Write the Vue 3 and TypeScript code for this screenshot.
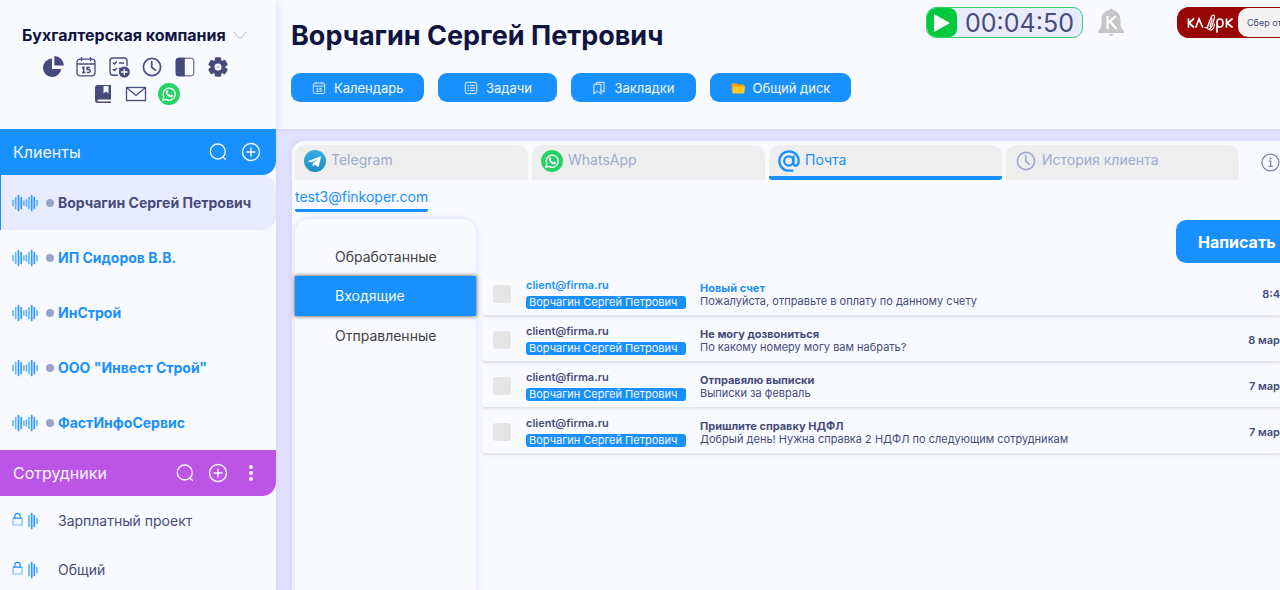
<script setup lang="ts">
interface Mail {
  from: string
  client: string
  subject: string
  snippet: string
  date: string
  unread: boolean
}

const company = 'Бухгалтерская компания'
const currentClient = 'Ворчагин Сергей Петрович'
const toolsTop = ['pie', 'calendar', 'tasks', 'clock', 'panel', 'gear']
const toolsBottom = ['book', 'mail', 'whatsapp']
const toolNames: Record<string, string> = {
  pie: 'Отчёты', calendar: 'Календарь', tasks: 'Задачи', clock: 'Время', panel: 'Панель',
  gear: 'Настройки', book: 'Закладки', mail: 'Почта', whatsapp: 'WhatsApp',
}
const clients = [currentClient, 'ИП Сидоров В.В.', 'ИнСтрой', 'ООО "Инвест Строй"', 'ФастИнфоСервис']
const staff = ['Зарплатный проект', 'Общий']
const actions = [
  { icon: 'calendar', label: 'Календарь' },
  { icon: 'list', label: 'Задачи' },
  { icon: 'bookmarks', label: 'Закладки' },
  { icon: 'folder', label: 'Общий диск' },
]
const tabs = [
  { icon: 'telegram', label: 'Telegram' },
  { icon: 'whatsapp', label: 'WhatsApp' },
  { icon: 'at', label: 'Почта' },
  { icon: 'clock', label: 'История клиента' },
]
const folders = ['Обработанные', 'Входящие', 'Отправленные']
const mails: Mail[] = [
  { from: 'client@firma.ru', client: currentClient, subject: 'Новый счет', snippet: 'Пожалуйста, отправьте в оплату по данному счету', date: '8:4', unread: true },
  { from: 'client@firma.ru', client: currentClient, subject: 'Не могу дозвониться', snippet: 'По какому номеру могу вам набрать?', date: '8 мар', unread: false },
  { from: 'client@firma.ru', client: currentClient, subject: 'Отправялю выписки', snippet: 'Выписки за февраль', date: '7 мар', unread: false },
  { from: 'client@firma.ru', client: currentClient, subject: 'Пришлите справку НДФЛ', snippet: 'Добрый день! Нужна справка 2 НДФЛ по следующим сотрудникам', date: '7 мар', unread: false },
]
</script>

<template>
  <div class="app">
    <svg class="sprite" aria-hidden="true">
      <symbol id="pie" viewBox="0 0 22 22">
        <path fill="currentColor" d="M10 2.6A9.2 9.2 0 1 0 19.3 13H10z" />
        <path fill="currentColor" d="M12.3 0A9.6 9.6 0 0 1 21.8 9.6h-9.5z" />
      </symbol>
      <symbol id="calendar" viewBox="0 0 22 22">
        <g fill="none" stroke="currentColor" stroke-width="1.3">
          <rect x="2" y="3.2" width="18" height="16.6" rx="3" />
          <path d="M2 8h18M6.5 1v4.2M15.5 1v4.2" />
          <path stroke-width="1.5" d="M7 12.2l1.7-.9v5.2M7 16.5h3.4M15.2 11.5h-3v2.1c3.8-.6 3.8 2.9 1.3 2.9q-1 0-1.6-.5" />
        </g>
      </symbol>
      <symbol id="tasks" viewBox="0 0 22 22">
        <g fill="none" stroke="currentColor" stroke-width="1.4">
          <path d="M10 19.3H5a3 3 0 0 1-3-3V5a3 3 0 0 1 3-3h11a3 3 0 0 1 3 3v5" />
          <path d="M5 6.5l1.500 1.500L9 5.500M5 13l1.500 1.500L9 12M11 7h5M11 12.500h2" />
        </g>
        <circle cx="16.3" cy="16" r="5.500" fill="currentColor" />
        <path d="M16.3 12.7v6.6M13 16h6.6" stroke="#f9faff" stroke-width="1.3" />
      </symbol>
      <symbol id="clock" viewBox="0 0 22 22">
        <g fill="none" stroke="currentColor" stroke-width="1.7" stroke-linecap="round">
          <circle cx="11" cy="11" r="8.6" />
          <path d="M10.700 5.500v5.700l3.600 3" />
        </g>
      </symbol>
      <symbol id="panel" viewBox="0 0 22 22">
        <rect x="2.200" y="2.200" width="17.600" height="17.600" rx="2.500" fill="none" stroke="currentColor" stroke-width="1" />
        <path fill="currentColor" d="M4.200 1.700h6.600v18.600H4.200A2.500 2.500 0 0 1 1.700 17.800V4.200A2.500 2.500 0 0 1 4.200 1.700z" />
      </symbol>
      <symbol id="gear" viewBox="0 0 22 22">
        <g fill="currentColor">
          <path fill-rule="evenodd" d="M11 3.500a7.500 7.500 0 1 0 0 15 7.500 7.500 0 0 0 0-15zm0 4a3.500 3.500 0 1 1 0 7 3.500 3.500 0 0 1 0-7z" />
          <g id="teeth">
            <rect x="7.800" y="1.200" width="6.400" height="5" rx="1.300" />
            <rect x="7.800" y="15.800" width="6.400" height="5" rx="1.300" />
          </g>
          <use href="#teeth" transform="rotate(60 11 11)" />
          <use href="#teeth" transform="rotate(120 11 11)" />
        </g>
        <circle cx="11" cy="11" r="3" fill="#f9faff" />
        <circle cx="11" cy="11" r="1.700" fill="currentColor" opacity=".25" />
      </symbol>
      <symbol id="book" viewBox="0 0 22 22">
        <path fill="currentColor" fill-rule="evenodd" d="M6 2h13v14.500H6.500a1 1 0 0 0 0 2H19V20H6a3 3 0 0 1-3-3V5a3 3 0 0 1 3-3zm5.500 1v7.500l2.500-2 2.500 2V3z" />
      </symbol>
      <symbol id="mail" viewBox="0 0 22 22">
        <g fill="none" stroke="currentColor" stroke-width="1.3">
          <rect x="1.500" y="4.500" width="19" height="13" />
          <path d="M1.500 4.500l9.500 8 9.500-8" />
        </g>
      </symbol>
      <symbol id="whatsapp" viewBox="0 0 22 22">
        <circle cx="11" cy="11" r="11" fill="#25d366" />
        <path fill="none" stroke="#fff" stroke-width="1.3" d="M4.900 17.300l.9-3.300a6.100 6.100 0 1 1 2.300 2.400z" />
        <path fill="#fff" d="M8.400 7.600c.5-.5 1-.4 1.200 0l.6 1.300c.1.400-.5.900-.6 1.200.6 1.100 1.500 1.900 2.700 2.300.4-.2.700-1 1.100-.9l1.500.8c.3.300 0 1.200-.5 1.600-1 .7-2.700.3-4.300-.9-1.800-1.400-2.900-3.500-1.700-5.400z" />
      </symbol>
      <symbol id="telegram" viewBox="0 0 22 22">
        <linearGradient id="tg" x1="0" y1="0" x2="0" y2="1">
          <stop offset="0" stop-color="#37aee2" /><stop offset="1" stop-color="#1e8cc4" />
        </linearGradient>
        <circle cx="11" cy="11" r="11" fill="url(#tg)" />
        <path fill="#fff" d="M4.500 11l11.500-4.600c.6-.2 1 .1.800 1l-1.900 8.900c-.1.600-.6.700-1.100.4l-3-2.200-1.500 1.500c-.3.300-.6.200-.6-.2l.1-2.600 5.200-4.800-6.500 4.100-3-.9c-.5-.1-.5-.4 0-.6z" />
      </symbol>
      <symbol id="at" viewBox="0 0 22 22">
        <g fill="none" stroke="currentColor" stroke-width="2.300" stroke-linecap="round">
          <circle cx="10.800" cy="11" r="4.600" />
          <path d="M15.500 6.500v7c0 3.500 5.200 3 5.200-2.500A9.700 9.700 0 1 0 11 20.700h3.500" />
        </g>
      </symbol>
      <symbol id="list" viewBox="0 0 22 22">
        <g fill="none" stroke="currentColor" stroke-width="1.500">
          <rect x="2" y="2" width="18" height="18" rx="3" />
          <path d="M5.500 7h2.500M10 7h7M5.500 11h2.500M10 11h7M5.500 15h2.500M10 15h7" />
        </g>
      </symbol>
      <symbol id="bookmarks" viewBox="0 0 22 22">
        <path fill="none" stroke="currentColor" stroke-width="1.500" d="M3 5h11v15.500l-5.500-4.500L3 20.500zM7 5V2h12v15.500l-5-3" />
      </symbol>
      <symbol id="folder" viewBox="0 0 22 22">
        <path fill="#ffa000" d="M1 3.500h8l2 2h9a1 1 0 0 1 1 1V16H1z" />
        <path fill="#ffca28" d="M4.500 8.500H22l-1 10a1 1 0 0 1-1 1H2z" />
      </symbol>
      <symbol id="search" viewBox="0 0 22 22">
        <g fill="none" stroke="currentColor" stroke-width="1.300" stroke-linecap="round">
          <circle cx="10.800" cy="10.500" r="7.500" /><path d="M16.200 16.200l2.300 2.300" />
        </g>
      </symbol>
      <symbol id="plus" viewBox="0 0 22 22">
        <g fill="none" stroke="currentColor" stroke-width="1.400" stroke-linecap="round">
          <circle cx="11" cy="11" r="8.500" /><path d="M11 7v8M7 11h8" />
        </g>
      </symbol>
      <symbol id="dots" viewBox="0 0 22 22">
        <g fill="currentColor"><circle cx="11" cy="5" r="2" /><circle cx="11" cy="11" r="2" /><circle cx="11" cy="17" r="2" /></g>
      </symbol>
      <symbol id="info" viewBox="0 0 22 22">
        <g fill="none" stroke="currentColor" stroke-width="1.400">
          <circle cx="11" cy="11" r="9.800" /><path d="M9 9.500h2.300v6M8.800 15.500h4.800" />
        </g>
        <circle cx="11" cy="6.300" r="1.200" fill="currentColor" />
      </symbol>
      <symbol id="wave" viewBox="0 0 26 18">
        <g fill="none" stroke="#1890ff" stroke-width="1.700" stroke-linecap="round">
          <path opacity=".9" d="M6.500 1.500v15M9.200 3.500v11M19.700 1.500v15M22.300 3.500v11" />
          <path opacity=".65" d="M1 6.500v5M3.700 3.500v11M11.900 7v4M14.400 6v6M17 3.500v11M25 6.500v5" />
        </g>
      </symbol>
      <symbol id="lockwave" viewBox="0 0 26 18">
        <g fill="none" stroke="#1890ff" stroke-width="1.200">
          <path opacity=".6" d="M1 6.500v6.500h9V6.500" />
          <path d="M.8 6.200h9.400M2.800 6V4a2.700 2.700 0 0 1 5.400 0v2" />
        </g>
        <g stroke="#1890ff" stroke-width="1.700" stroke-linecap="round">
          <path opacity=".9" d="M19.700 1.500v15M22.300 3.500v11" />
          <path opacity=".65" d="M17 3.500v11M25 6.500v5" />
        </g>
      </symbol>
    </svg>

    <aside class="sidebar">
      <div class="brand">
        <button class="company" type="button">
          {{ company }}
          <svg class="chevron" viewBox="0 0 14 9"><path d="M1 1l6 7 6-7" /></svg>
        </button>
        <div class="tools">
          <button v-for="t in toolsTop" :key="t" class="tool" type="button" :aria-label="toolNames[t]"><svg><use :href="'#' + t" /></svg></button>
        </div>
        <div class="tools">
          <button v-for="t in toolsBottom" :key="t" class="tool" type="button" :aria-label="toolNames[t]"><svg><use :href="'#' + t" /></svg></button>
        </div>
      </div>

      <div class="section clients-head">
        <h2>Клиенты</h2>
        <button type="button" aria-label="Поиск клиента"><svg><use href="#search" /></svg></button>
        <button type="button" aria-label="Добавить клиента"><svg><use href="#plus" /></svg></button>
      </div>
      <ul class="list">
        <li v-for="(c, i) in clients" :key="c">
          <a href="#" class="client" :class="{ active: i === 0 }">
            <svg class="wave"><use href="#wave" /></svg><i class="dot" />{{ c }}
          </a>
        </li>
      </ul>

      <div class="section staff-head">
        <h2>Сотрудники</h2>
        <button type="button" aria-label="Поиск сотрудника"><svg><use href="#search" /></svg></button>
        <button type="button" aria-label="Добавить сотрудника"><svg><use href="#plus" /></svg></button>
        <button type="button" aria-label="Меню"><svg><use href="#dots" /></svg></button>
      </div>
      <ul class="list">
        <li v-for="s in staff" :key="s">
          <a href="#" class="staff"><svg class="wave"><use href="#lockwave" /></svg>{{ s }}</a>
        </li>
      </ul>
    </aside>

    <main class="main">
      <header class="header">
        <div class="heading">
          <h1>{{ currentClient }}</h1>
          <div class="actions">
            <button v-for="a in actions" :key="a.label" class="action" type="button">
              <svg><use :href="'#' + a.icon" /></svg>{{ a.label }}
            </button>
          </div>
        </div>
        <div class="timer">
          <button class="play" type="button" aria-label="Старт"><svg viewBox="0 0 16 18"><path d="M0 0l16 9-16 9z" /></svg></button>
          <time>00:04:50</time>
        </div>
        <button class="bell" type="button" aria-label="Уведомления">
          <svg viewBox="0 0 26 28">
            <path fill="#c6c6c6" d="M11.500 2a1.500 1.500 0 0 1 3 0C20 3 22.500 7 22.500 12v6l3.500 5.500v1.500H0v-1.500L3.500 18v-6C3.500 7 6 3 11.500 2zM10.500 26h5a2.500 2 0 0 1-5 0z" />
            <path fill="none" stroke="#fff" stroke-width="2.200" d="M9.500 8v13M18 8l-8 6.500M12 13.500l6.500 7.500" />
          </svg>
        </button>
        <a href="#" class="klerk" aria-label="Клерк">
          <svg viewBox="0 0 46 20">
            <g fill="none" stroke="#fff" stroke-width="1.700" stroke-linecap="round">
              <path d="M1.500 6v8M6.500 6L2 10l4.500 4M9 14l3-8 3.500 8M30 19V9q0-3 3-3t3 4-3 4-3-2.500M39.500 6v8M45 6l-5 4 5 4" />
              <path stroke-width="1.200" d="M18 14.500c2 1 3-1 4-4l2-6c1-3 4-3.500 3.500 0-.2 2-1.500 5-2.500 8-1 3.500-4 5-4.500 2.500-.3-2 1.500-5 2.500-8 .8-2.500 2.500-2 2 0l-2 6.500M23 17c2.500.5 4-2 4.500-6" />
            </g>
          </svg>
          <span>Сбер от</span>
        </a>
      </header>

      <section class="panel">
        <nav class="tabs">
          <button v-for="t in tabs" :key="t.label" type="button" class="tab" :class="[t.icon, { active: t.icon === 'at' }]">
            <svg><use :href="'#' + t.icon" /></svg>{{ t.label }}
          </button>
          <button class="info" type="button" aria-label="Информация"><svg><use href="#info" /></svg></button>
        </nav>
        <a href="#" class="account">test3@finkoper.com</a>
        <div class="mailbox">
          <nav class="folders">
            <a v-for="f in folders" :key="f" href="#" :class="{ active: f === 'Входящие' }">{{ f }}</a>
          </nav>
          <div class="messages">
            <button class="compose" type="button">Написать</button>
            <ul class="rows">
              <li v-for="(m, i) in mails" :key="i" class="row" :class="{ unread: m.unread }">
                <input type="checkbox" :aria-label="m.subject">
                <div class="sender"><strong>{{ m.from }}</strong><span>{{ m.client }}</span></div>
                <div class="body"><strong>{{ m.subject }}</strong><p>{{ m.snippet }}</p></div>
                <time>{{ m.date }}</time>
              </li>
            </ul>
          </div>
        </div>
      </section>
    </main>
  </div>
</template>

<style>
body { overflow: hidden; background: #e2e2ff; }
</style>

<style scoped>
.app { display: flex; min-height: 100vh; overflow: hidden; font-family: Inter, "Liberation Sans", sans-serif; color: #454c7b; background: #e2e2ff; }
.sprite { position: absolute; width: 0; height: 0; }
button { padding: 0; border: 0; background: none; color: inherit; font: inherit; cursor: pointer; }
button svg { display: block; }
a { color: inherit; text-decoration: none; }
h1, h2, p, ul { margin: 0; padding: 0; font-weight: inherit; }
ul { list-style: none; }

.sidebar { flex: 0 0 276px; background: #f9faff; box-shadow: 0 0 8px #d2d0ff; z-index: 1; }
.brand { box-sizing: border-box; height: 129px; padding-top: 24px; }
.company { display: flex; align-items: center; gap: 7px; margin: 0 0 10px 22px; font-size: 16px; line-height: 22px; font-weight: 700; color: #0f153f; white-space: nowrap; }
.chevron { width: 14px; height: 9px; fill: none; stroke: #b4bedb; stroke-width: 1; }
.tools { display: flex; justify-content: center; gap: 11px; padding-right: 5px; margin-bottom: 5px; }
.tool svg { width: 22px; height: 22px; }
.section { box-sizing: border-box; display: flex; align-items: center; gap: 11px; height: 46px; padding: 0 14px 0 13px; color: #f5f7ff; border-radius: 0 0 14px; }
.section h2 { flex: 1; font-size: 16px; }
.section svg { width: 22px; height: 22px; }
.clients-head { background: #1890ff; }
.staff-head { background: #bc55e5; }
.client, .staff { box-sizing: border-box; display: flex; align-items: center; padding-left: 12px; font-size: 14px; white-space: nowrap; }
.client { height: 55px; font-weight: 700; color: #1890ff; }
.client.active { color: #454c7b; background: #e9ecff; border-left: 1px solid #1890ff; border-radius: 0 14px 14px 0; padding-left: 11px; }
.staff { height: 49px; }
.wave { width: 26px; height: 18px; flex: none; }
.dot { width: 8px; height: 8px; margin: 0 4px 0 8px; border-radius: 50%; background: #99a3c9; }
.staff .wave { margin-right: 20px; }

.main { flex: 1; min-width: 0; display: flex; flex-direction: column; }
.header { box-sizing: border-box; display: flex; align-items: flex-start; height: 129px; padding: 7px 0 0 15px; background: #f9faff; box-shadow: 0 1px 3px #cfcfe8; }
.heading { flex: 1; }
h1 { padding-top: 12px; font-size: 27px; line-height: 34px; font-weight: 700; color: #0f153f; white-space: nowrap; }
.actions { display: flex; gap: 14px; margin-top: 20px; }
.action { box-sizing: border-box; display: flex; align-items: center; justify-content: center; gap: 8px; min-width: 119px; height: 29px; padding: 0 21px; border-radius: 9px; background: #1890ff; color: #f5f7ff; font-size: 13px; white-space: nowrap; }
.action svg { width: 14px; height: 14px; }
.timer { box-sizing: border-box; display: flex; width: 157px; height: 31px; border: 1px solid #33d06a; border-radius: 10px; background: #e9ecff; overflow: hidden; }
.play { display: grid; place-items: center; width: 30px; border-radius: 8px; background: #00c93c; }
.play svg { width: 16px; height: 18px; fill: #fff; }
.timer time { flex: 1; text-align: center; font-size: 25px; line-height: 31px; }
.bell { margin: 1px 53px 0 15px; }
.bell svg { width: 26px; height: 28px; }
.klerk { box-sizing: border-box; display: flex; align-items: center; width: 103px; height: 31px; border: 1px solid #980606; border-right: 0; border-radius: 12px 0 0 12px; background: #980606; overflow: hidden; }
.klerk svg { flex: none; width: 46px; height: 20px; margin: 0 5px 0 9px; }
.klerk span { flex: 1; padding-left: 9px; font-size: 9px; line-height: 29px; border-radius: 10px 0 0 10px; background: #f3f3f3; white-space: nowrap; }

.panel { flex: 1; display: flex; flex-direction: column; margin: 12px 0 0 16px; padding: 4px 0 0 3px; border-radius: 12px 0 0; background: #f9faff; box-shadow: 0 0 6px #cfcdff; }
.tabs { display: flex; gap: 4px; }
.tab { box-sizing: border-box; flex: 1; display: flex; align-items: flex-start; gap: 5px; height: 35px; padding: 5px 9px 0; border-radius: 10px 10px 0 0; background: #eee; color: #a0abcf; font-size: 14px; line-height: 20px; white-space: nowrap; overflow: hidden; }
.tab svg { width: 22px; height: 22px; flex: none; }
.tab.active { color: #1890ff; border-bottom: 4px solid #1890ff; border-radius: 10px 10px 3px 3px; }
.info { flex: 0 0 37px; padding-left: 18px; color: #7a80a5; }
.info svg { width: 19px; height: 19px; }
.account { align-self: flex-start; margin-top: 7px; padding-bottom: 2px; border-bottom: 3px solid #1890ff; border-radius: 2px; color: #1890ff; font-size: 14px; line-height: 20px; }
.mailbox { flex: 1; display: flex; gap: 6px; margin-top: 7px; }
.folders { flex: 0 0 181px; padding-top: 18px; border-radius: 14px 14px 0 0; box-shadow: 0 0 7px #d9d7fb; }
.folders a { display: block; padding-left: 40px; font-size: 14px; line-height: 39px; color: #424242; }
.folders .active { background: #1890ff; color: #f5f7ff; line-height: 40px; box-shadow: 0 0 4px #444; }
.messages { flex: 1; min-width: 0; }
.compose { display: block; width: 104px; height: 43px; margin: 1px 0 10px auto; padding-left: 22px; border-radius: 10px 0 0 10px; background: #1890ff; color: #fff; font-size: 16px; font-weight: 700; text-align: left; }
.rows { display: flex; flex-direction: column; gap: 4px; }
.row { box-sizing: border-box; display: flex; align-items: center; height: 42px; padding-left: 11px; border-radius: 4px 0 0 4px; background: #f9faff; box-shadow: 0 2px 3px #dedfe5; font-size: 11px; line-height: 13px; }
.row input { appearance: none; flex: none; width: 18px; height: 18px; margin: 0 15px 0 0; border-radius: 3px; background: #e5e5e5; }
.sender { flex: 0 0 160px; margin-right: 14px; }
.sender strong { display: block; margin-bottom: 4px; font-weight: 600; }
.sender span { display: block; padding-left: 3px; border-radius: 3px; background: #1890ff; color: #f5f7ff; white-space: nowrap; }
.body { flex: 1; min-width: 0; padding-top: 2px; white-space: nowrap; }
.body strong { font-weight: 700; }
.unread .sender strong, .unread .body strong { color: #1890ff; }
.row time { font-weight: 600; white-space: nowrap; }
</style>
